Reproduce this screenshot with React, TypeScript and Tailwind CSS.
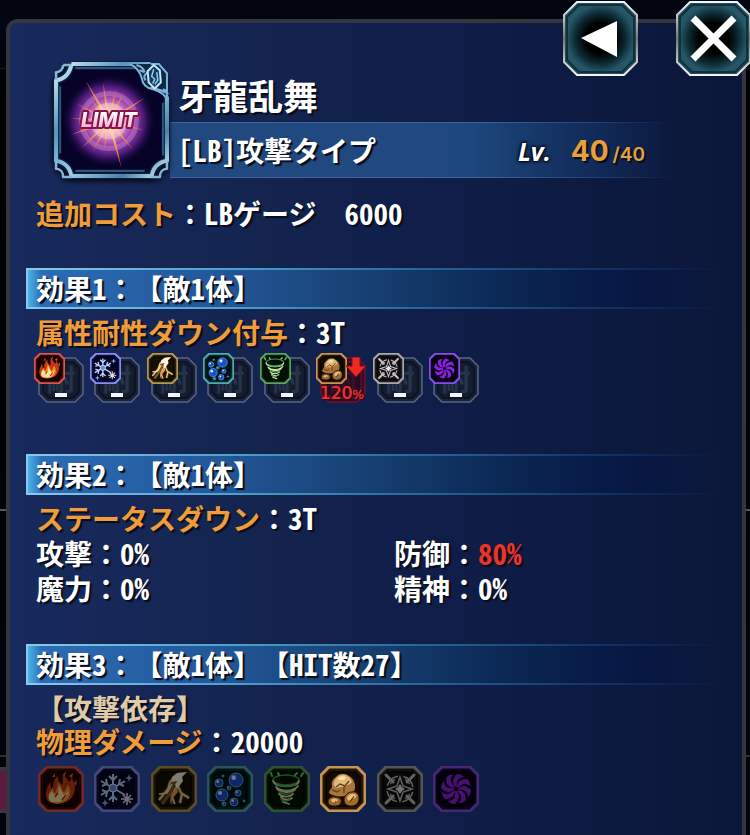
import type { ReactNode } from 'react'

type Element =
  | 'fire'
  | 'ice'
  | 'thunder'
  | 'water'
  | 'wind'
  | 'earth'
  | 'light'
  | 'dark'

const elements: Element[] = [
  'fire',
  'ice',
  'thunder',
  'water',
  'wind',
  'earth',
  'light',
  'dark',
]

const labels: Record<Element, string> = {
  fire: '火',
  ice: '氷',
  thunder: '雷',
  water: '水',
  wind: '風',
  earth: '土',
  light: '光',
  dark: '闇',
}

const frames: Record<Element, { edge: string; fill: string }> = {
  fire: { edge: '#d8564e', fill: '#3a0805' },
  ice: { edge: '#8790ee', fill: '#0a0c48' },
  thunder: { edge: '#b29a4c', fill: '#2c2004' },
  water: { edge: '#52a9b0', fill: '#04272e' },
  wind: { edge: '#5f9f5e', fill: '#07200b' },
  earth: { edge: '#c49653', fill: '#271404' },
  light: { edge: '#a9a9ad', fill: '#201c20' },
  dark: { edge: '#8450e0', fill: '#13032e' },
}

const OCTAGON = '9,1 37,1 45,9 45,37 37,45 9,45 1,37 1,9'

const glyphs: Record<Element, ReactNode> = {
  fire: (
    <>
      <path
        d="M9 33c-3-7 1-12 3-17 1 3 0 5 2 7 2-5 1-10 6-13-1 5 2 6 4 9 2-4-1-8 2-12 1 5 4 6 5 9 2-1 2-3 2-5 4 5 5 11 3 16-2 7-8 10-14 10S11 38 9 33z"
        fill="#c63a14"
      />
      <path
        d="M11 33c-1-5 1-8 4-11 0 3 1 4 2 5 2-4 3-6 3-11 4 4 3 8 6 10 3-3 3-6 2-9 5 5 6 11 2 16-5 6-16 7-19 0z"
        fill="#ee8a32"
      />
      <path
        d="M11 34c-1-4 0-7 3-9 1 3 3 5 5 3 2-2 2-4 1-8 4 3 4 7 6 9 2-1 3-2 4-5 1 6-4 12-10 12-5 0-8 0-9-2z"
        fill="#ffe39a"
      />
      <path
        d="M17 31l3-4M24 34l4-5M27 22l2-5M15 22l2-5"
        stroke="#a62c10"
        strokeWidth="1.5"
      />
      <path
        d="M31 10l4-3-1 5zM14 11l3-4v4zM36 17l3-3-1 6zM25 9l3-4-1 5z"
        fill="#e85b22"
      />
    </>
  ),
  ice: (
    <>
      <g stroke="#bcd4ff" strokeWidth="2" fill="none">
        <path d="M19 8v28M7 15l24 14M7 29l24-14" />
        <path d="M15 10l4 4 4-4M15 34l4-4 4 4M8 20l5-2-1-5M8 24l5 2-1 5M30 20l-5-2 1-5" />
      </g>
      <circle cx="19" cy="22" r="4" fill="#5f8de8" stroke="#e9f3ff" />
      <path
        d="M33 27v12M27 33h12M29 29l8 8M37 29l-8 8"
        stroke="#e3dcef"
        strokeWidth="1.6"
      />
      <path
        d="M35 8l1 3 3 1-3 1-1 3-1-3-3-1 3-1zM11 33l1 3 3 1-3 1-1 3-1-3-3-1 3-1z"
        fill="#86a8ff"
      />
    </>
  ),
  thunder: (
    <>
      <path
        d="M31 7L20 15l-3 8-9 11M24 15l-5 12-8 11M30 9l-3 11-6 8 1 10M27 20l3 7 8 5M31 28l-2 9"
        stroke="#a0762c"
        strokeWidth="3.6"
        strokeOpacity="0.7"
        fill="none"
      />
      <path
        d="M24 12L19 16l-2 7-9 11M21 18l-5 9-8 1M27 18l-5 9-1 4 3 7M27 20l3 7 8 5M31 28l-2 9"
        stroke="#f3d9a2"
        strokeWidth="1.6"
        fill="none"
      />
      <path d="M26 7l10-1-5 5 1 4-6 8-2-4 2-4-6 1 1-5z" fill="#fff4dc" />
      <path d="M26 21l-6 8-1 9 3-6 5-6z" fill="#e99a52" />
    </>
  ),
  water: (
    <>
      {[
        [29, 14, 7],
        [12, 17, 4],
        [15, 29, 6],
        [31, 27, 3],
        [27, 36, 4],
        [22, 22, 2],
        [16, 10, 1],
        [37, 35, 1],
        [17, 38, 2],
      ].map(([cx, cy, r]) => (
        <g key={`${cx}-${cy}`}>
          <circle cx={cx} cy={cy} r={r} fill="#1e4cd0" stroke="#4fb4dc" />
          <circle cx={cx - r / 3} cy={cy - r / 3} r={r / 3} fill="#d6f4ff" />
        </g>
      ))}
    </>
  ),
  wind: (
    <g fill="none" strokeLinecap="round">
      <ellipse cx="22" cy="14" rx="13" ry="5" stroke="#3f9a4c" strokeWidth="1.6" />
      <path
        d="M9 15c2 7 25 7 26 0M34 20c-5 6-17 6-22 1M12 21c2 6 18 7 20 1M29 28c-4 4-11 3-14 0M17 31c3 4 9 3 11 1M19 36l6 2"
        stroke="#cfe2a8"
        strokeWidth="1.8"
      />
      <path
        d="M13 18c5 3 14 3 19 0M15 26c5 3 10 3 14 0M17 33c2 3 6 3 9 0"
        stroke="#4aae5a"
        strokeWidth="1.5"
      />
      <path d="M8 10l-1-3M15 9l-1-2M31 9l2-2M37 10l2-3" stroke="#63d070" strokeWidth="2" />
    </g>
  ),
  earth: (
    <>
      <path
        d="M9 27c0-3 3-4 3-7-1-4 1-7 4-9 3-4 9-4 13-1 4 2 5 5 6 9 0 4 0 6-3 8-6 4-17 5-23 0z"
        fill="#a8753a"
      />
      <path
        d="M14 16c2-5 6-8 11-7 4 1 6 4 7 7-2 3-4 2-6 4-3 2-6 0-9 2-3-1-4-3-3-6z"
        fill="#e0b878"
      />
      <path d="M18 12l4-2 4 1-2 3h-5z" fill="#f8e2b4" />
      <path
        d="M16 21l4-3 5 2 4-5M24 20v7M12 24l5 2 3-2"
        stroke="#6b3f18"
        strokeWidth="1.4"
        fill="none"
      />
      <path
        d="M24 33c1-4 4-7 8-7 4-1 7 2 7 6 0 5-3 8-8 8-4 0-7-2-7-7z"
        fill="#a06c2e"
        stroke="#2a1405"
      />
      <path d="M27 32c1-3 4-5 7-4 3 0 3 3 1 4-2 0-2 3-4 3s-4-1-4-3z" fill="#e8bd74" />
      <path
        d="M8 36c0-3 3-6 7-5 4 0 7 2 6 5 0 3-3 4-7 4-3 0-6-1-6-4z"
        fill="#9a662b"
        stroke="#2a1405"
      />
      <path d="M11 34c2-2 5-2 7 0-1 2-2 1-3 3-2-1-4-1-4-3z" fill="#e3b66c" />
      <path d="M29 36l3-2 2-4M14 38l2-3" stroke="#6b3f18" />
    </>
  ),
  light: (
    <g fill="none" stroke="#c3c1c3">
      <circle cx="23" cy="23" r="13" strokeWidth="1.5" strokeDasharray="15 5.4" strokeDashoffset="-3" />
      <path d="M23 11l3 9 9 3-9 3-3 9-3-9-9-3 9-3z" strokeWidth="1.5" />
      <path d="M23 18l2 3 3 2-3 2-2 3-2-3-3-2 3-2z" fill="#e6e6e6" stroke="none" />
      <path
        d="M9 9l7 7M37 9l-7 7M9 37l7-7M37 37l-7-7"
        strokeWidth="3"
        strokeLinecap="round"
      />
      <path d="M13 18l5-5M28 13l5 5M13 28l5 5M28 33l5-5" strokeWidth="1.3" />
    </g>
  ),
  dark: (
    <g fill="#8a1fe0">
      {[0, 45, 90, 135, 180, 225, 270, 315].map((angle) => (
        <path
          key={angle}
          transform={`rotate(${angle} 23 23)`}
          d="M23 21c-4-3-4-8 1-13 3 0 5 1 7 3-5 0-8 3-7 10z"
        />
      ))}
    </g>
  ),
}

type IconProps = {
  element: Element
  className: string
}

const ElementIcon = ({ element, className }: IconProps) => {
  const { edge, fill } = frames[element]
  return (
    <svg
      viewBox="0 0 46 46"
      className={className}
      role="img"
      aria-label={labels[element]}
    >
      <polygon points={OCTAGON} fill={fill} stroke={edge} strokeWidth="3" />
      <polygon
        points="11,6 35,6 40,11 40,35 35,40 11,40 6,35 6,11"
        fill="#000"
        fillOpacity="0.5"
        stroke="#000"
        strokeOpacity="0.6"
        strokeWidth="2"
      />
      {glyphs[element]}
    </svg>
  )
}

const ResistTile = ({ element, value }: { element: Element; value?: string }) => (
  <li className="relative h-[50px] w-[46px]">
    <svg viewBox="0 0 46 46" className="absolute top-1 left-0 size-[46px]">
      <polygon
        points={OCTAGON}
        fill={value ? '#3a0c24' : '#18233b'}
        stroke={value ? '#6c1430' : '#596582'}
        strokeWidth="1.5"
      />
      <polygon
        points="11,5 35,5 41,11 41,35 35,41 11,41 5,35 5,11"
        fill={value ? '#250b24' : '#141d30'}
        stroke={value ? '#4d1028' : '#0c1424'}
        strokeWidth="2"
      />
      <text
        x="23"
        y="34"
        textAnchor="middle"
        fontSize="29"
        fontWeight="700"
        fontFamily="Noto Sans CJK JP, sans-serif"
        fill={value ? '#3a112a' : '#27334b'}
        className="[text-shadow:none]"
      >
        耐
      </text>
    </svg>
    <ElementIcon element={element} className="absolute top-0 -left-1 size-[31px]" />
    {value ? (
      <>
        <svg viewBox="0 0 20 20" className="absolute top-1 left-[26px] size-5">
          <path d="M6 0h8v9h6L10 20 0 9h6z" fill="#ee2a24" stroke="#8b0f16" />
        </svg>
        <span className="absolute -bottom-1 left-0 font-['DejaVu_Sans'] text-[17px] leading-6 whitespace-nowrap text-[#f0322e] [text-shadow:0_0_1px_#f0322e,1px_1px_1px_#200008]">
          {value}
          <span className="text-[12px]">%</span>
        </span>
      </>
    ) : (
      <span className="absolute bottom-1.5 left-[17px] h-1 w-3 bg-[#f4f5fa]" />
    )}
  </li>
)

const Mixed = ({ children }: { children: string }) => (
  <>
    {children.split(/([A-Za-z0-9%[\]]+)/).map((part, i) =>
      i % 2 ? (
        <span
          key={i}
          className="font-['Noto_Sans_Mono_CJK_JP','Noto_Sans_CJK_JP',sans-serif] text-[29px] leading-none"
        >
          {part}
        </span>
      ) : (
        part
      )
    )}
  </>
)

const EffectHeading = ({ children }: { children: string }) => (
  <h2 className="mr-6 ml-4 h-[41px] border-2 border-r-0 bg-[linear-gradient(to_right,#4bb4e8,#2b6cb4_2%,#24599c_25%,#163f70_50%,#09234f_73%,#071742_88%,transparent)] pl-2 text-[28px] leading-[37px] font-bold whitespace-nowrap [border-image:linear-gradient(to_right,#8cc8ee,#4aa0cc_30%,#2a6a9c_55%,#14376a_80%,transparent)_2]">
    <Mixed>{children}</Mixed>
  </h2>
)

type LineProps = {
  label: string
  value: string
  labelClass?: string
  valueClass?: string
}

const Line = ({
  label,
  value,
  labelClass = 'text-[#f09c38]',
  valueClass = 'text-white',
}: LineProps) => (
  <p className="h-[35px] text-[28px] leading-[35px] font-bold whitespace-nowrap">
    <span className={labelClass}>{label}</span>：
    <span className={valueClass}>
      <Mixed>{value}</Mixed>
    </span>
  </p>
)

const LimitEmblem = () => (
  <svg
    viewBox="2 1 114 116"
    className="relative z-10 size-[118px] shrink-0 drop-shadow-[0_3px_2px_#000a]"
    role="img"
    aria-label="LIMIT"
  >
    <defs>
      <radialGradient id="burst">
        <stop offset="0" stopColor="#fff6e8" />
        <stop offset="0.25" stopColor="#f6a3d8" />
        <stop offset="0.5" stopColor="#a04bb0" />
        <stop offset="0.75" stopColor="#4a1a78" />
        <stop offset="1" stopColor="#0a0330" stopOpacity="0" />
      </radialGradient>
      <linearGradient id="metal" x1="0" y1="0" x2="1" y2="1">
        <stop offset="0" stopColor="#d3f0ff" />
        <stop offset="0.3" stopColor="#5a93bd" />
        <stop offset="0.55" stopColor="#9ccfea" />
        <stop offset="0.8" stopColor="#4b80aa" />
        <stop offset="1" stopColor="#d6f1ff" />
      </linearGradient>
      <linearGradient id="ray" x1="0" y1="0" x2="0" y2="1">
        <stop offset="0" stopColor="#e0512e" />
        <stop offset="1" stopColor="#ffe9a0" />
      </linearGradient>
      <linearGradient id="word" x1="0" y1="0" x2="0" y2="1">
        <stop offset="0.2" stopColor="#fff" />
        <stop offset="1" stopColor="#f59ac8" />
      </linearGradient>
    </defs>
    <path
      d="M19 3h80l4 5 11 11v80l-5 5-7 9-5 4H19l-5-5-9-8-4-6V20l4-4 8-8z"
      fill="#06122b"
    />
    <path d="M20 9h75l15 19v67l-16 16H22L7 95V23z" fill="#070228" />
    <circle cx="57" cy="60" r="46" fill="url(#burst)" />
    <circle cx="57" cy="60" r="27" fill="none" stroke="#f3a5ee" strokeOpacity="0.3" strokeWidth="5" />
    <g fill="url(#ray)">
      {[
        [-30, 46],
        [-9, 38],
        [12, 32],
        [28, 32],
        [57, 42],
        [82, 32],
        [105, 36],
        [140, 36],
        [165, 48],
        [190, 30],
        [208, 34],
        [225, 38],
        [250, 40],
        [274, 38],
        [298, 36],
        [320, 28],
      ].map(([angle, length]) => (
        <path
          key={angle}
          transform={`rotate(${angle} 57 60)`}
          d={`M57 ${60 - length}l2 ${length}h-4z`}
        />
      ))}
    </g>
    <circle cx="57" cy="60" r="18" fill="#fff4ea" fillOpacity="0.35" />
    <g
      fontFamily="Inter, sans-serif"
      fontSize="20"
      fontWeight="800"
      fontStyle="italic"
      textAnchor="middle"
      strokeLinejoin="round"
      className="[text-shadow:none]"
    >
      <text
        x="57"
        y="66"
        fill="url(#word)"
        stroke="#86134c"
        strokeWidth="4"
        paintOrder="stroke"
      >
        LIMIT
      </text>
    </g>
    <g fill="none" strokeLinejoin="round">
      <path
        d="M20 4h78M114 36v63c-8 1-14 7-15 15H20c-1-8-7-14-15-15V20C13 19 19 13 20 4"
        stroke="#0b2038"
        strokeWidth="7"
      />
      <path
        d="M20 4h78M114 36v63c-8 1-14 7-15 15H20c-1-8-7-14-15-15V20C13 19 19 13 20 4"
        stroke="url(#metal)"
        strokeWidth="4"
      />
      <path
        d="M12 5h8M12 5c0 4-3 7-7 7v8M98 115h9c0-5 3-8 7-8v-8M20 115h-8c0-5-3-8-7-8v-8"
        stroke="#86b7d8"
        strokeWidth="2.5"
      />
      <path d="M24 8h58M110 42v52M24 109h68M9 26v66" stroke="#2c567e" strokeWidth="2" />
    </g>
    <path d="M78 4h27l10 12v24c-3-6-7-9-14-11-7-1-11-5-12-12-1-6-5-10-11-13z" fill="#0d2747" />
    <path
      d="M78 4c6 3 9 7 11 13 1 7 5 11 12 12 7 2 11 5 14 11M84 5c4 1 7 3 8 7M93 20c-3-4 0-6 2-8M98 27c4 2 9 1 15 5M110 29c3 0 4 2 5 5M87 10l5 2M98 4h8l8 9v25"
      fill="none"
      stroke="#7fb4d8"
      strokeWidth="2"
    />
    <path d="M101 5l6 5 1 12-6 6-6-6-1-11z" fill="#153a5f" stroke="#bfe8fb" strokeWidth="2" />
    <path d="M101 9l-2 7 3 3-2 4M104 12l1 8-3 4" fill="none" stroke="#8ccbf0" strokeWidth="1.5" />
  </svg>
)

type FrameButtonProps = {
  label: string
  children: ReactNode
}

const FrameButton = ({ label, children }: FrameButtonProps) => (
  <button type="button" aria-label={label} className="cursor-pointer">
    <svg viewBox="0 0 75 75" className="size-[75px]">
      <defs>
        <radialGradient id={`glow-${label}`}>
          <stop offset="0.45" stopColor="#000" />
          <stop offset="0.75" stopColor="#0d2932" />
          <stop offset="1" stopColor="#265667" />
        </radialGradient>
        <linearGradient id={`rim-${label}`} x1="0" y1="0" x2="0" y2="1">
          <stop offset="0" stopColor="#f2f6f7" />
          <stop offset="0.5" stopColor="#77776e" />
          <stop offset="1" stopColor="#f2f6f7" />
        </linearGradient>
      </defs>
      <polygon
        points="14,1 61,1 74,14 74,61 61,74 14,74 1,61 1,14"
        fill="#235063"
        stroke={`url(#rim-${label})`}
        strokeWidth="2"
      />
      <polygon
        points="16,4 59,4 71,16 71,59 59,71 16,71 4,59 4,16"
        fill={`url(#glow-${label})`}
        stroke="#12303c"
        strokeWidth="2"
      />
      {children}
    </svg>
  </button>
)

const Backdrop = () => (
  <div className="absolute inset-0 bg-[linear-gradient(to_bottom,#02040f,#030714_3%,#000_12%,#03050e)]">
    <div className="absolute inset-x-0 top-[68px] h-px bg-[#1c1a1c]" />
    <div className="absolute inset-x-0 top-[509px] h-0.5 bg-[#55575c]" />
    <div className="absolute inset-x-0 top-[755px] h-0.5 bg-[#2e2d2c]" />
    <div className="absolute top-[767px] left-0 h-[46px] w-2 border-y-4 border-[#3b383d] bg-[#5c1c41]" />
  </div>
)

export default function App() {
  return (
    <div className="relative min-h-screen overflow-hidden bg-black font-['Noto_Sans_CJK_JP',sans-serif] text-white [text-spacing-trim:space-all]">
      <Backdrop />
      <div className="absolute top-px -right-px z-20 flex gap-[38px]">
        <FrameButton label="back">
          <path d="M18 37L54 20v36z" fill="#fff" />
        </FrameButton>
        <FrameButton label="close">
          <path d="M17 17l41 41M58 17L17 58" stroke="#fff" strokeWidth="7" />
        </FrameButton>
      </div>

      <div className="relative h-[19px]" />
      <main className="relative mr-1 ml-1.5 min-h-[816px] rounded-t-xl border-4 border-b-0 border-[#34353f] bg-[linear-gradient(to_right,#18295d,#14244f_35%,#0f1d48_60%,#0b1739)] pt-[38px] [text-shadow:2px_2px_1px_#080c1c]">
        <header className="flex pr-[67px] pl-[42px]">
          <LimitEmblem />
          <div className="flex flex-1 flex-col justify-end">
            <h1 className="pl-2 text-[35px] leading-[51px] font-bold">
              牙龍乱舞
            </h1>
            <div className="mt-0.5 mb-px flex h-14 items-center border-y bg-[linear-gradient(to_right,#21497f_50%,#1d467c_60%,#122c5c_82%,transparent)] pl-2 [border-image:linear-gradient(to_right,#3d649b_60%,transparent)_1]">
              <p className="text-[28px] leading-[35px] font-bold">
                <Mixed>[LB]攻撃タイプ</Mixed>
              </p>
              <p className="mt-1.5 mr-[30px] ml-auto font-[Inter] leading-[35px] font-bold whitespace-nowrap text-[#e9a03a]">
                <span className="mr-5 font-['Open_Sans'] text-[25px] text-white italic [text-shadow:0_0_3px_#000,0_0_3px_#000,0_0_4px_#000]">
                  Lv.
                </span>
                <span className="text-[28px]">40</span>
                <span className="ml-1 text-[19px] font-semibold">/40</span>
              </p>
            </div>
          </div>
        </header>

        <div className="mt-[17px] pl-[26px]">
          <Line label="追加コスト" value="LBゲージ　6000" />
        </div>

        <section className="mt-[37px]">
          <EffectHeading>効果1：【敵1体】</EffectHeading>
          <div className="mt-1.5 pl-[26px]">
            <Line label="属性耐性ダウン付与" value="3T" />
            <ul className="mt-[3px] ml-0.5 flex w-[441px] max-w-full justify-between">
              {elements.map((element) => (
                <ResistTile
                  key={element}
                  element={element}
                  value={element === 'earth' ? '120' : undefined}
                />
              ))}
            </ul>
          </div>
        </section>

        <section className="mt-[51px]">
          <EffectHeading>効果2：【敵1体】</EffectHeading>
          <div className="mt-1.5 pl-[26px]">
            <Line label="ステータスダウン" value="3T" />
            <div className="grid grid-cols-[358px_1fr]">
              <Line label="攻撃" value="0%" labelClass="text-white" />
              <Line
                label="防御"
                value="80%"
                labelClass="text-white"
                valueClass="text-[#ee3424]"
              />
              <Line label="魔力" value="0%" labelClass="text-white" />
              <Line label="精神" value="0%" labelClass="text-white" />
            </div>
          </div>
        </section>

        <section className="mt-[38px]">
          <EffectHeading>効果3：【敵1体】【HIT数27】</EffectHeading>
          <div className="mt-1.5 pl-[26px]">
            <p className="h-[33px] text-[28px] leading-[35px] font-bold text-[#e0cba8]">
              【攻撃依存】
            </p>
            <Line label="物理ダメージ" value="20000" />
            <ul className="mt-[7px] ml-0.5 flex w-[441px] max-w-full justify-between">
              {elements.map((element) => (
                <li key={element}>
                  <ElementIcon
                    element={element}
                    className={
                      element === 'earth'
                        ? 'size-[46px]'
                        : 'size-[46px] brightness-50'
                    }
                  />
                </li>
              ))}
            </ul>
          </div>
        </section>
      </main>
    </div>
  )
}
